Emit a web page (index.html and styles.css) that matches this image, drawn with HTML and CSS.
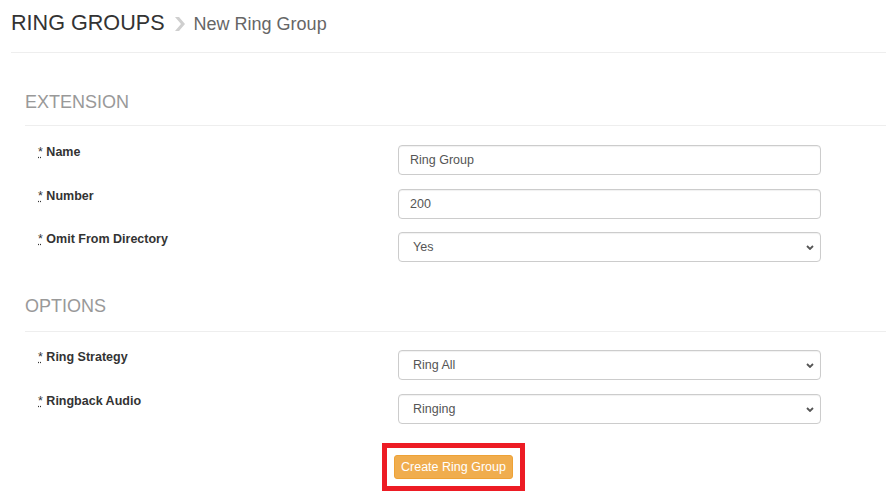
FILE: index.html
```html
<!DOCTYPE html>
<html lang="en">
<head>
  <meta charset="UTF-8" />
  <meta name="viewport" content="width=device-width, initial-scale=1.0"/>
  <title>New Ring Group</title>
  <link rel="stylesheet" href="styles.css">
</head>
<body>

  <div class="page">
    <div class="page-header">
      <h1>RING GROUPS</h1>
      <svg class="crumb-sep" width="10" height="14" viewBox="0 0 10 14">
        <polygon points="0,0 4,0 10,7 4,14 0,14 6,7" fill="#cfcfcf"/>
      </svg>
      <span class="crumb">New Ring Group</span>
    </div>

    <form class="form">
      <!-- Extension -->
      <h2 class="section-title">EXTENSION</h2>

      <div class="row">
        <label class="label" for="name"><abbr title="required">*</abbr> Name</label>
        <div class="control">
          <input type="text" id="name" value="Ring Group">
        </div>
      </div>

      <div class="row">
        <label class="label" for="number"><abbr title="required">*</abbr> Number</label>
        <div class="control">
          <input type="text" id="number" value="200">
        </div>
      </div>

      <div class="row">
        <label class="label" for="omit"><abbr title="required">*</abbr> Omit From Directory</label>
        <div class="control select-wrap">
          <select id="omit">
            <option>Yes</option>
            <option>No</option>
          </select>
          <svg class="caret" width="8" height="5" viewBox="0 0 8 5">
            <path d="M1 1l3 3 3-3" fill="none" stroke="#555" stroke-width="1.8"/>
          </svg>
        </div>
      </div>

      <!-- Options -->
      <h2 class="section-title options">OPTIONS</h2>

      <div class="row">
        <label class="label" for="strategy"><abbr title="required">*</abbr> Ring Strategy</label>
        <div class="control select-wrap">
          <select id="strategy">
            <option>Ring All</option>
            <option>Round Robin</option>
          </select>
          <svg class="caret" width="8" height="5" viewBox="0 0 8 5">
            <path d="M1 1l3 3 3-3" fill="none" stroke="#555" stroke-width="1.8"/>
          </svg>
        </div>
      </div>

      <div class="row">
        <label class="label" for="ringback"><abbr title="required">*</abbr> Ringback Audio</label>
        <div class="control select-wrap">
          <select id="ringback">
            <option>Ringing</option>
            <option>Music On Hold</option>
          </select>
          <svg class="caret" width="8" height="5" viewBox="0 0 8 5">
            <path d="M1 1l3 3 3-3" fill="none" stroke="#555" stroke-width="1.8"/>
          </svg>
        </div>
      </div>

      <div class="actions">
        <div class="highlight">
          <button type="button" class="btn-create">Create Ring Group</button>
        </div>
      </div>
    </form>
  </div>

</body>
</html>
```

FILE: styles.css
```css
* {
  box-sizing: border-box;
}

body {
  margin: 0;
  background: #fff;
  font-family: 'Liberation Sans', Arial, sans-serif;
  color: #333;
}

.page {
  padding-left: 11px;
}

.page-header {
  display: flex;
  align-items: center;
  padding: 9px 0 15px;
  border-bottom: 1px solid #eee;
}

.page-header h1 {
  margin: 0;
  font-size: 21.6px;
  font-weight: normal;
  line-height: 26px;
  color: #333;
}

.crumb-sep {
  margin: 2px 9px 0 10px;
}

.crumb {
  font-size: 18px;
  line-height: 26px;
  color: #666;
  padding-top: 2px;
}

.form {
  padding-left: 14px;
}

.section-title {
  margin: 39px 0 0;
  padding-bottom: 13px;
  font-size: 18px;
  font-weight: normal;
  line-height: 20px;
  color: #999;
  border-bottom: 1px solid #eee;
}

.section-title.options {
  margin-top: 34px;
  padding-bottom: 15px;
}

.section-title + .row {
  margin-top: 19px;
}

.section-title.options + .row {
  margin-top: 18px;
}

.row {
  display: flex;
  align-items: flex-start;
  margin-top: 13.5px;
}

.label {
  width: 373px;
  padding-left: 13px;
  font-size: 12.5px;
  font-weight: bold;
  line-height: 14px;
  color: #333;
}

.label abbr {
  font-weight: normal;
  text-decoration: underline dotted;
}

.control {
  width: 423px;
}

.select-wrap {
  position: relative;
}

input[type="text"], select {
  display: block;
  width: 100%;
  height: 30px;
  padding: 0 11px;
  font-family: 'Liberation Sans', Arial, sans-serif;
  font-size: 12.5px;
  color: #555;
  background: #fff;
  border: 1px solid #ccc;
  border-radius: 4px;
  box-shadow: inset 0 1px 1px rgba(0, 0, 0, 0.06);
}

select {
  appearance: none;
  -webkit-appearance: none;
  padding-left: 14px;
}

.caret {
  position: absolute;
  right: 7px;
  top: 13px;
  pointer-events: none;
}

.actions {
  display: flex;
  justify-content: center;
  margin-top: 19px;
  padding-right: 4px;
}

.highlight {
  border: 5px solid #ed1c24;
  padding: 7px;
}

.btn-create {
  display: block;
  height: 24px;
  padding: 0 6px;
  font-family: 'Liberation Sans', Arial, sans-serif;
  font-size: 12.5px;
  line-height: 22px;
  color: #fff;
  background-color: #f0ad4e;
  border: 1px solid #eea236;
  border-radius: 3px;
  cursor: pointer;
}

.btn-create:hover {
  background-color: #ec971f;
}
```
